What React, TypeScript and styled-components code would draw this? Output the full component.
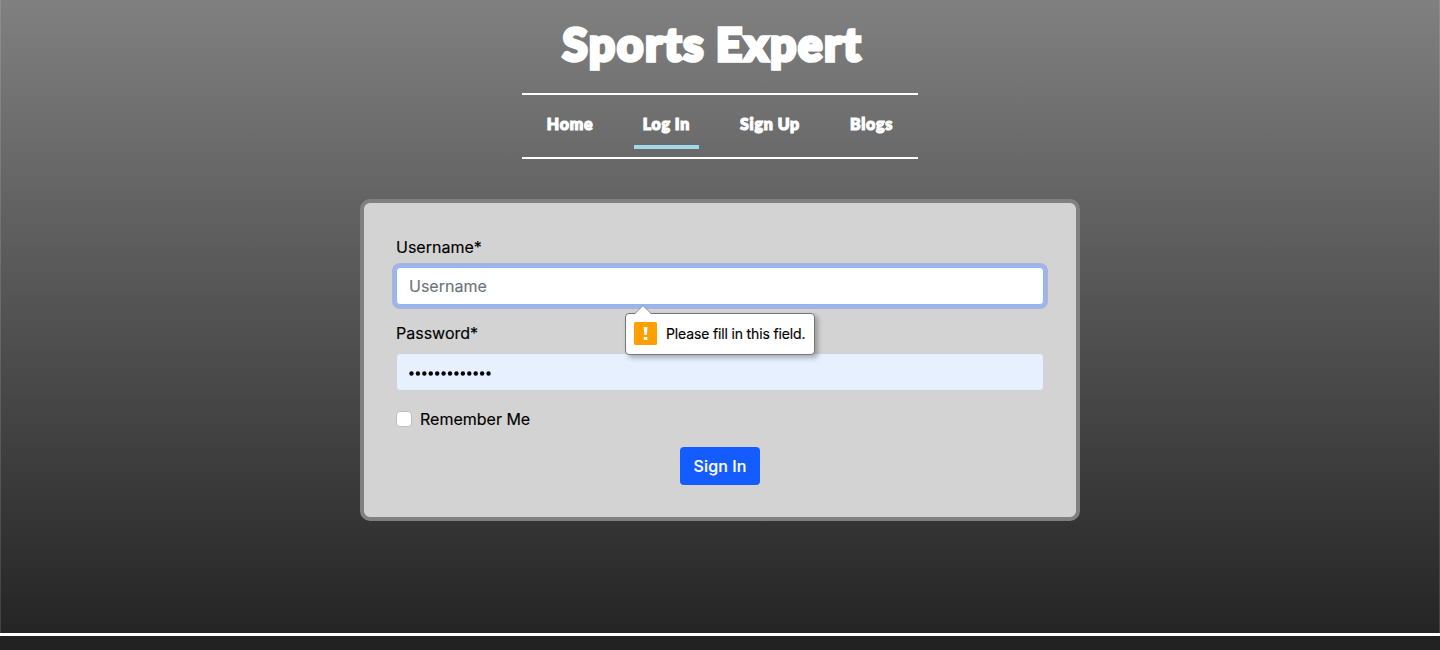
import React from "react";
import styled, { createGlobalStyle } from "styled-components";

const GlobalStyle = createGlobalStyle`
  *, *::before, *::after { box-sizing: border-box; }
  html, body { margin: 0; height: 100%; overflow: hidden; background: #222; }
  body { font-family: Inter, "Liberation Sans", sans-serif; font-size: 16px; line-height: 24px; color: #000; -webkit-text-stroke: 0.15px; }
  #root { height: 100%; }
`;

const Page = styled.div`
  height: 650px;
  display: flex;
  flex-direction: column;
  border: solid rgba(255, 255, 255, 0.13);
  border-width: 0 1px;
  background: linear-gradient(#808080, #222 650px) border-box;
`;

const Main = styled.main`
  flex: 0 0 633px;
  display: flex;
  flex-direction: column;
  align-items: center;
`;

const Header = styled.header`
  width: 396px;
  display: flex;
  flex-direction: column;
  align-items: center;
  color: #fff;
  font-family: Lato, Inter, sans-serif;
  font-weight: 900;
`;

const Title = styled.h1`
  margin: 0;
  height: 93px;
  padding: 15px 15px 0 0;
  font-size: 45.5px;
  font-weight: 900;
  line-height: 58px;
  letter-spacing: 1.9px;
  word-spacing: -2px;
  white-space: nowrap;
  -webkit-text-stroke: 3.6px #fff;
`;

const Nav = styled.nav`
  width: 396px;
  height: 66px;
  padding: 8px 0;
  display: flex;
  border: solid #fff;
  border-width: 2px 0;
`;

const NavLink = styled.a<{ $width: number; $active?: boolean }>`
  width: ${(p) => p.$width}px;
  margin: 0 16px;
  padding-top: 9px;
  height: 46px;
  display: flex;
  justify-content: center;
  white-space: nowrap;
  letter-spacing: 0.75px;
  word-spacing: -0.5px;
  -webkit-text-stroke: 1.2px #fff;
  border-bottom: 4px solid ${(p) => (p.$active ? "#a2d8e8" : "transparent")};
`;

const Card = styled.form`
  width: 720px;
  height: 322px;
  margin-top: 40px;
  padding: 32px;
  display: flex;
  flex-direction: column;
  border: 4px solid #808080;
  border-radius: 10px;
  background: #d3d3d3;
`;

const Field = styled.div`
  position: relative;
  display: flex;
  flex-direction: column;
  gap: 8px;
  margin-bottom: 16px;
`;

const Label = styled.label`
  height: 24px;
`;

const Input = styled.div<{ $focused?: boolean }>`
  height: 38px;
  padding: 6px 12px;
  border: 1px solid ${(p) => (p.$focused ? "#86b7fe" : "#ced4da")};
  border-radius: 4px;
  background: ${(p) => (p.$focused ? "#fff" : "#e6f0ff")};
  box-shadow: ${(p) => (p.$focused ? "0 0 0 4px #a3b3e2" : "none")};
  color: #6c757d;
`;

const Dots = styled.div`
  height: 24px;
  display: flex;
  align-items: center;
  padding: 3px 0 0 0;
`;

const DotRow = styled.svg`
  display: block;
`;

const Check = styled.label`
  height: 24px;
  display: flex;
  align-items: center;
  gap: 8px;
  margin-bottom: 16px;
`;

const Box = styled.span`
  width: 16px;
  height: 16px;
  border: 1px solid #bfbfbf;
  border-radius: 4px;
  background: #fff;
`;

const Submit = styled.button`
  align-self: center;
  width: 80px;
  height: 38px;
  padding: 0;
  border: 0;
  border-radius: 4px;
  background: #145cff;
  color: #fff;
  font: inherit;
  font-weight: 500;
  letter-spacing: 0.1px;
`;

const Tooltip = styled.div`
  position: absolute;
  z-index: 2;
  left: 229px;
  top: 78px;
  width: 190px;
  height: 42px;
  padding: 0 8px;
  display: flex;
  align-items: center;
  gap: 9px;
  border: 1px solid #767676;
  border-radius: 4px;
  background: #fff;
  box-shadow: 3px 3px 5px rgba(0, 0, 0, 0.28);
  font-size: 14px;
  letter-spacing: -0.15px;
  white-space: nowrap;
`;

const Arrow = styled.svg`
  position: absolute;
  left: 8px;
  top: -9px;
`;

const WarningIcon = styled.svg`
  flex: none;
  margin-bottom: 1px;
`;

const Footer = styled.footer`
  flex: 1;
  margin: 0 -1px;
  border-top: 3px solid #fff;
  background: #232223;
`;

export default function App() {
  return (
    <>
      <GlobalStyle />
      <Page>
        <Main>
          <Header>
            <Title>Sports Expert</Title>
            <Nav>
              <NavLink $width={64}>Home</NavLink>
              <NavLink $width={65} $active>Log In</NavLink>
              <NavLink $width={78}>Sign Up</NavLink>
              <NavLink $width={61}>Blogs</NavLink>
            </Nav>
          </Header>
          <Card>
            <Field>
              <Label>Username*</Label>
              <Input $focused>Username</Input>
              <Tooltip>
                <Arrow width="18" height="10" viewBox="0 0 18 10">
                  <path d="M1 9 L9 1 L17 9 V10 H1Z" fill="#fff" />
                  <path d="M1 8.5 L9 .5 L17 8.5" fill="none" stroke="#888" strokeWidth=".8" />
                </Arrow>
                <WarningIcon width="23" height="23" viewBox="0 0 23 23">
                  <rect width="23" height="23" rx="1.5" fill="#ffa000" />
                  <path d="M9.7 5h3.8l-.6 8h-2.6zM9.8 15h3.5v3H9.8z" fill="#fff" />
                </WarningIcon>
                <span>Please fill in this field.</span>
              </Tooltip>
            </Field>
            <Field>
              <Label>Password*</Label>
              <Input>
                <Dots>
                  <DotRow width="84" height="5" viewBox="0 0 84 5">
                    {Array.from({ length: 13 }, (_, i) => (
                      <circle key={i} cx={2.5 + i * 6.42} cy="2.5" r="2.2" fill="#000" />
                    ))}
                  </DotRow>
                </Dots>
              </Input>
            </Field>
            <Check><Box />Remember Me</Check>
            <Submit type="button">Sign In</Submit>
          </Card>
        </Main>
        <Footer />
      </Page>
    </>
  );
}
